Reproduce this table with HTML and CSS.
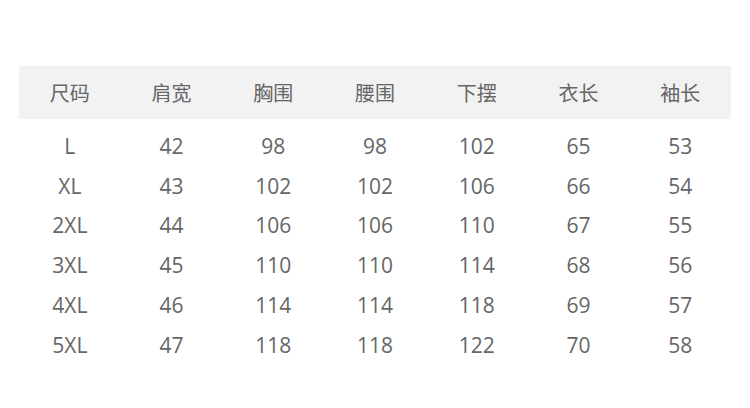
FILE: index.html
```html
<!DOCTYPE html>
<html lang="zh">
<head>
<meta charset="utf-8">
<link rel="stylesheet" href="styles.css">
</head>
<body>
<div class="table">
  <div class="row head">
    <div>尺码</div><div>肩宽</div><div>胸围</div><div>腰围</div><div>下摆</div><div>衣长</div><div>袖长</div>
  </div>
  <div class="body">
    <div class="row"><div>L</div><div>42</div><div>98</div><div>98</div><div>102</div><div>65</div><div>53</div></div>
    <div class="row"><div>XL</div><div>43</div><div>102</div><div>102</div><div>106</div><div>66</div><div>54</div></div>
    <div class="row"><div>2XL</div><div>44</div><div>106</div><div>106</div><div>110</div><div>67</div><div>55</div></div>
    <div class="row"><div>3XL</div><div>45</div><div>110</div><div>110</div><div>114</div><div>68</div><div>56</div></div>
    <div class="row"><div>4XL</div><div>46</div><div>114</div><div>114</div><div>118</div><div>69</div><div>57</div></div>
    <div class="row"><div>5XL</div><div>47</div><div>118</div><div>118</div><div>122</div><div>70</div><div>58</div></div>
  </div>
</div>
</body>
</html>
```

FILE: styles.css
```css
html, body {
  margin: 0;
  padding: 0;
  background: #ffffff;
}
body {
  width: 750px;
  height: 408px;
  overflow: hidden;
  font-family: "Open Sans", "Noto Sans CJK SC", sans-serif;
  color: #666666;
}
.table {
  margin: 66px 0 0 19px;
  width: 712px;
}
.row {
  display: grid;
  grid-template-columns: repeat(7, 1fr);
  height: 39.8px;
  align-items: center;
  text-align: center;
  font-size: 21px;
}
.head {
  height: 53px;
  background: #f2f2f2;
  font-family: "Noto Sans CJK SC", sans-serif;
  font-size: 20px;
  font-weight: 400;
}
.body {
  padding-top: 7px;
}
```
